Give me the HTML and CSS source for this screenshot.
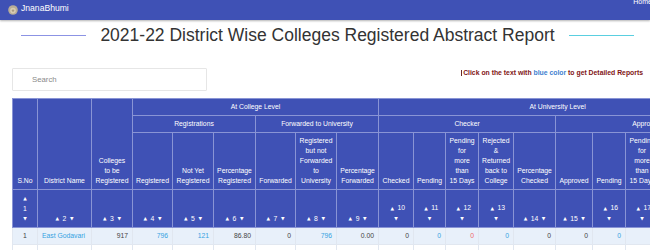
FILE: index.html
```html
<!DOCTYPE html>
<html lang="en">
<head>
<meta charset="utf-8">
<title>District Wise Colleges Registered Abstract Report</title>
<link rel="stylesheet" href="styles.css">
</head>
<body>
<nav class="topbar">
  <div class="brand">
    <svg class="logo" width="10" height="10" viewBox="0 0 10 10"><circle cx="5" cy="5" r="4.8" fill="#b8ad98"/><circle cx="5" cy="5.6" r="2.8" fill="#d8ccb2"/><circle cx="5" cy="5.6" r="1.2" fill="#a89a80"/></svg>
    <span class="brand-name">JnanaBhumi</span>
  </div>
  <a class="home">Home</a>
</nav>
<main class="page">
  <div class="title-row">
    <span class="rule rule-left"></span>
    <h1>2021-22 District Wise Colleges Registered Abstract Report</h1>
    <span class="rule rule-right"></span>
  </div>
  <div class="tools">
    <input class="search" type="text" placeholder="Search">
    <p class="hint">Click on the text with <span class="blue">blue color</span> to get Detailed Reports</p>
  </div>
  <div class="table-wrap">
    <table class="report">
      <colgroup>
        <col style="width:25px"><col style="width:54px"><col style="width:41px">
        <col style="width:40px"><col style="width:41px"><col style="width:42px">
        <col style="width:40px"><col style="width:41px"><col style="width:42px">
        <col style="width:35px"><col style="width:32px"><col style="width:33px"><col style="width:35px"><col style="width:42px">
        <col style="width:37px"><col style="width:33px"><col style="width:33px"><col style="width:35px"><col style="width:43px">
      </colgroup>
      <thead>
        <tr>
          <th rowspan="3">S.No</th>
          <th rowspan="3">District Name</th>
          <th rowspan="3">Colleges<br>to be<br>Registered</th>
          <th colspan="6" class="mid">At College Level</th>
          <th colspan="10" class="mid">At University Level</th>
        </tr>
        <tr>
          <th colspan="3" class="mid">Registrations</th>
          <th colspan="3" class="mid">Forwarded to University</th>
          <th colspan="5" class="mid">Checker</th>
          <th colspan="5" class="mid">Approver</th>
        </tr>
        <tr>
          <th>Registered</th>
          <th>Not Yet<br>Registered</th>
          <th>Percentage<br>Registered</th>
          <th>Forwarded</th>
          <th>Registered<br>but not<br>Forwarded<br>to<br>University</th>
          <th>Percentage<br>Forwarded</th>
          <th>Checked</th>
          <th>Pending</th>
          <th>Pending<br>for<br>more<br>than<br>15 Days</th>
          <th>Rejected<br>&amp;<br>Returned<br>back to<br>College</th>
          <th>Percentage<br>Checked</th>
          <th>Approved</th>
          <th>Pending</th>
          <th>Pending<br>for<br>more<br>than<br>15 Days</th>
          <th>Rejected<br>&amp;<br>Returned<br>back to<br>College</th>
          <th>Percentage<br>Approved</th>
        </tr>
        <tr class="sort">
          <th><span class="ar">▲</span><br>1<br><span class="ar">▼</span></th>
          <th><span class="ar">▲</span>2<span class="ar">▼</span></th>
          <th><span class="ar">▲</span>3<span class="ar">▼</span></th>
          <th><span class="ar">▲</span>4<span class="ar">▼</span></th>
          <th><span class="ar">▲</span>5<span class="ar">▼</span></th>
          <th><span class="ar">▲</span>6<span class="ar">▼</span></th>
          <th><span class="ar">▲</span>7<span class="ar">▼</span></th>
          <th><span class="ar">▲</span>8<span class="ar">▼</span></th>
          <th><span class="ar">▲</span>9<span class="ar">▼</span></th>
          <th><span class="ar">▲</span>10<br><span class="ar">▼</span></th>
          <th><span class="ar">▲</span>11<br><span class="ar">▼</span></th>
          <th><span class="ar">▲</span>12<br><span class="ar">▼</span></th>
          <th><span class="ar">▲</span>13<br><span class="ar">▼</span></th>
          <th><span class="ar">▲</span>14<span class="ar">▼</span></th>
          <th><span class="ar">▲</span>15<span class="ar">▼</span></th>
          <th><span class="ar">▲</span>16<br><span class="ar">▼</span></th>
          <th><span class="ar">▲</span>17<br><span class="ar">▼</span></th>
          <th><span class="ar">▲</span>18<br><span class="ar">▼</span></th>
          <th><span class="ar">▲</span>19<span class="ar">▼</span></th>
        </tr>
      </thead>
      <tbody>
        <tr class="odd">
          <td class="c">1</td><td class="l"><a class="lnk">East Godavari</a></td><td>917</td>
          <td><a class="lnk">796</a></td><td><a class="lnk">121</a></td><td>86.80</td>
          <td>0</td><td><a class="lnk">796</a></td><td>0.00</td>
          <td>0</td><td><a class="lnk">0</a></td><td><span class="red">0</span></td><td><a class="lnk">0</a></td><td>0</td>
          <td>0</td><td><a class="lnk">0</a></td><td><span class="red">0</span></td><td><a class="lnk">0</a></td><td>0</td>
        </tr>
        <tr>
          <td class="c">2</td><td class="l"><a class="lnk">Chittoor</a></td><td>883</td>
          <td><a class="lnk">674</a></td><td><a class="lnk">209</a></td><td>76.33</td>
          <td>0</td><td><a class="lnk">674</a></td><td>0.00</td>
          <td>0</td><td><a class="lnk">0</a></td><td><span class="red">0</span></td><td><a class="lnk">0</a></td><td>0</td>
          <td>0</td><td><a class="lnk">0</a></td><td><span class="red">0</span></td><td><a class="lnk">0</a></td><td>0</td>
        </tr>
      </tbody>
    </table>
  </div>
</main>
</body>
</html>
```
FILE: styles.css
```css
html, body {
  margin: 0;
  background: #fff;
  overflow: hidden;
  font-family: "Liberation Sans", Arial, sans-serif;
}

.topbar {
  height: 20px;
  background: #3f51b5;
  display: flex;
  justify-content: space-between;
  align-items: flex-start;
  box-shadow: 0 1px 2px rgba(0, 0, 0, 0.3);
  padding-left: 8px;
  position: relative;
  z-index: 1;
}

.brand {
  display: flex;
  align-items: flex-start;
  gap: 3px;
  padding-top: 3px;
  color: #fff;
}

.logo {
  margin-top: 2px;
  display: block;
}

.brand-name {
  font-size: 8.6px;
  line-height: 10px;
}

.home {
  font-size: 7px;
  line-height: 4px;
  color: #fff;
  margin-right: -2px;
}

.page {
  padding: 0 7px 0 12px;
}

.title-row {
  display: flex;
  align-items: center;
  justify-content: center;
  gap: 14px;
  margin-top: 5px;
}

.title-row h1 {
  margin: 0;
  font-weight: normal;
  font-size: 17.5px;
  line-height: 20px;
  color: #333;
  white-space: nowrap;
}

.rule {
  width: 65px;
  height: 1px;
  flex: none;
}

.rule-left { background: #8c93e4; }
.rule-right { background: #5acfe0; }

.tools {
  display: flex;
  justify-content: space-between;
  align-items: flex-start;
  margin-top: 23px;
}

.search {
  box-sizing: border-box;
  width: 195px;
  height: 23px;
  margin: 0;
  border: 1px solid #e6e6e6;
  border-radius: 1px;
  padding: 0 0 0 19px;
  font-family: "Liberation Sans", Arial, sans-serif;
  font-size: 7.8px;
  color: #555;
  outline: none;
}

.search::placeholder {
  color: #8a8a8a;
}

.hint {
  margin: 0;
  font-size: 6.85px;
  line-height: 10px;
  font-weight: bold;
  color: #7f1414;
  white-space: nowrap;
}

.hint::before {
  content: "";
  display: inline-block;
  width: 1px;
  height: 6px;
  background: #6a2a2a;
  margin-right: 1px;
  vertical-align: -1px;
}

.hint .blue { color: #3d7fd0; }

.table-wrap {
  margin-top: 7px;
  margin-right: -7px;
  overflow: hidden;
}

.report {
  border-collapse: collapse;
  table-layout: fixed;
  width: 724px;
  font-size: 6.8px;
  line-height: 10px;
}

.report th {
  background: #3f51b5;
  color: #fff;
  font-weight: normal;
  border: 1px solid #8994d5;
  padding: 3px 2px;
  vertical-align: bottom;
  text-align: center;
}

.report th.mid {
  vertical-align: middle;
}

.report .ar {
  font-size: 4.6px;
  font-family: "DejaVu Sans", sans-serif;
  margin: 0 3.5px;
  vertical-align: 0.5px;
}

.report td {
  border: 1px solid #e1e7f0;
  padding: 3px 4px;
  color: #444;
  text-align: right;
  white-space: nowrap;
}

.report td.c { text-align: center; }
.report td.l { text-align: left; }

.report tr.odd td { background: #e8f0fa; }

.lnk { color: #36a3e2; }
.red { color: #ef6a6a; }
```
